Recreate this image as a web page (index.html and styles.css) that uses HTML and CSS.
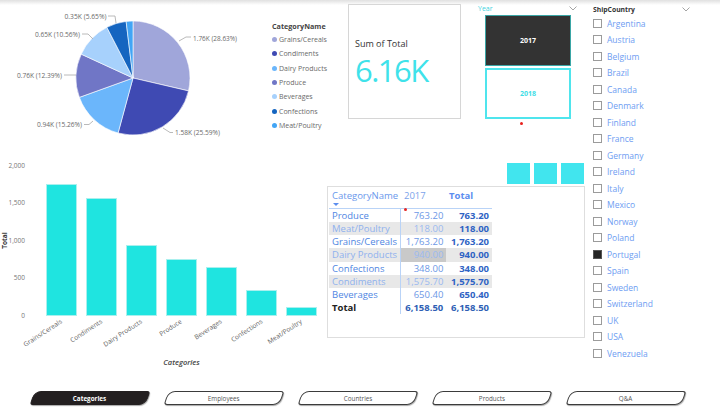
FILE: index.html
```html
<!DOCTYPE html>
<html lang="en">
<head>
<meta charset="utf-8">
<title>Categories</title>
<link rel="stylesheet" href="styles.css">
</head>
<body>
<div class="canvas">
  <div class="main">
    <div class="top-row">
      <svg class="pie" width="265" height="140" viewBox="0 0 265 140">
        <g class="slices">
          <path d="M133,78 L133,21 A57,57 0 0,1 188.52,90.89 Z" fill="#A0A6DA"/>
          <path d="M133,78 L188.52,90.89 A57,57 0 0,1 118.07,133.01 Z" fill="#3F4AB3"/>
          <path d="M133,78 L118.07,133.01 A57,57 0 0,1 79.39,97.37 Z" fill="#6BB6FB"/>
          <path d="M133,78 L79.39,97.37 A57,57 0 0,1 81.23,54.16 Z" fill="#7076C6"/>
          <path d="M133,78 L81.23,54.16 A57,57 0 0,1 106.89,27.33 Z" fill="#A7D1FC"/>
          <path d="M133,78 L106.89,27.33 A57,57 0 0,1 126.13,21.42 Z" fill="#1565C0"/>
          <path d="M133,78 L126.13,21.42 A57,57 0 0,1 133,21 Z" fill="#42A5F5"/>
        </g>
        <g class="leaders">
          <polyline points="179,41 186,37 191,37"/>
          <polyline points="163,128 170,132.5 173,132.5"/>
          <polyline points="84,124.5 89,124.5 93,121"/>
          <polyline points="64,75 76,75"/>
          <polyline points="82,34 88,34 93,39"/>
          <polyline points="108,16 115,16 116,23"/>
        </g>
        <text x="193" y="40.5" textLength="44" lengthAdjust="spacingAndGlyphs">1.76K (28.63%)</text>
        <text x="175" y="135" textLength="45" lengthAdjust="spacingAndGlyphs">1.58K (25.59%)</text>
        <text x="37" y="127" textLength="45" lengthAdjust="spacingAndGlyphs">0.94K (15.26%)</text>
        <text x="17" y="77.5" textLength="45" lengthAdjust="spacingAndGlyphs">0.76K (12.39%)</text>
        <text x="35" y="36.5" textLength="45" lengthAdjust="spacingAndGlyphs">0.65K (10.56%)</text>
        <text x="64.5" y="18.5" textLength="42" lengthAdjust="spacingAndGlyphs">0.35K (5.65%)</text>
      </svg>

      <div class="legend">
        <div class="legend-title">CategoryName</div>
        <div class="legend-item"><span class="dot c-grains"></span>Grains/Cereals</div>
        <div class="legend-item"><span class="dot c-condiments"></span>Condiments</div>
        <div class="legend-item"><span class="dot c-dairy"></span>Dairy Products</div>
        <div class="legend-item"><span class="dot c-produce"></span>Produce</div>
        <div class="legend-item"><span class="dot c-beverages"></span>Beverages</div>
        <div class="legend-item"><span class="dot c-confections"></span>Confections</div>
        <div class="legend-item"><span class="dot c-meat"></span>Meat/Poultry</div>
      </div>

      <div class="card">
        <div class="card-title">Sum of Total</div>
        <div class="card-value">6.16K</div>
      </div>

      <div class="year">
        <div class="year-head">
          <span>Year</span>
          <svg class="chev" width="8" height="5" viewBox="0 0 8 5"><polyline points="0.5,0.5 4,4 7.5,0.5"/></svg>
        </div>
        <div class="year-box y2017">2017</div>
        <div class="year-box y2018">2018</div>
        <div class="red-dot"></div>
      </div>
    </div>

    <div class="bottom-row">
      <div class="barchart">
        <div class="bar-main">
          <div class="y-title"><span>Total</span></div>
          <div class="y-ticks">
            <span>2,000</span><span>1,500</span><span>1,000</span><span>500</span><span>0</span>
          </div>
          <div class="plot">
            <div class="bar" style="height:132.2px"></div>
            <div class="bar" style="height:118.2px"></div>
            <div class="bar" style="height:70.5px"></div>
            <div class="bar" style="height:57.2px"></div>
            <div class="bar" style="height:48.8px"></div>
            <div class="bar" style="height:26.1px"></div>
            <div class="bar" style="height:8.9px"></div>
          </div>
        </div>
        <div class="x-labels">
          <div class="xl"><span>Grains/Cereals</span></div>
          <div class="xl"><span>Condiments</span></div>
          <div class="xl"><span>Dairy Products</span></div>
          <div class="xl"><span>Produce</span></div>
          <div class="xl"><span>Beverages</span></div>
          <div class="xl"><span>Confections</span></div>
          <div class="xl"><span>Meat/Poultry</span></div>
        </div>
        <div class="x-title">Categories</div>
      </div>

      <div class="right-col">
        <div class="tiles">
          <div class="tile"></div><div class="tile"></div><div class="tile"></div>
        </div>
        <div class="matrix">
          <div class="thead">
            <div class="th c1"><span>CategoryName</span><span class="sort"></span></div>
            <div class="th c2">2017<span class="mark"></span></div>
            <div class="th c3 bold">Total</div>
          </div>
          <div class="tr"><div class="c1">Produce</div><div class="c2">763.20</div><div class="c3">763.20</div></div>
          <div class="tr dim"><div class="c1">Meat/Poultry</div><div class="c2">118.00</div><div class="c3">118.00</div></div>
          <div class="tr"><div class="c1">Grains/Cereals</div><div class="c2">1,763.20</div><div class="c3">1,763.20</div></div>
          <div class="tr dim"><div class="c1">Dairy Products</div><div class="c2 sel">940.00</div><div class="c3">940.00</div></div>
          <div class="tr"><div class="c1">Confections</div><div class="c2">348.00</div><div class="c3">348.00</div></div>
          <div class="tr dim"><div class="c1">Condiments</div><div class="c2">1,575.70</div><div class="c3">1,575.70</div></div>
          <div class="tr"><div class="c1">Beverages</div><div class="c2">650.40</div><div class="c3">650.40</div></div>
          <div class="tr total"><div class="c1">Total</div><div class="c2">6,158.50</div><div class="c3">6,158.50</div></div>
        </div>
      </div>
    </div>
  </div>

  <div class="ship">
    <div class="ship-head">
      <span>ShipCountry</span>
      <svg class="chev" width="8" height="5" viewBox="0 0 8 5"><polyline points="0.5,0.5 4,4 7.5,0.5"/></svg>
    </div>
    <div class="ship-item"><span class="box"></span>Argentina</div>
    <div class="ship-item"><span class="box"></span>Austria</div>
    <div class="ship-item"><span class="box"></span>Belgium</div>
    <div class="ship-item"><span class="box"></span>Brazil</div>
    <div class="ship-item"><span class="box"></span>Canada</div>
    <div class="ship-item"><span class="box"></span>Denmark</div>
    <div class="ship-item"><span class="box"></span>Finland</div>
    <div class="ship-item"><span class="box"></span>France</div>
    <div class="ship-item"><span class="box"></span>Germany</div>
    <div class="ship-item"><span class="box"></span>Ireland</div>
    <div class="ship-item"><span class="box"></span>Italy</div>
    <div class="ship-item"><span class="box"></span>Mexico</div>
    <div class="ship-item"><span class="box"></span>Norway</div>
    <div class="ship-item"><span class="box"></span>Poland</div>
    <div class="ship-item"><span class="box on"></span>Portugal</div>
    <div class="ship-item"><span class="box"></span>Spain</div>
    <div class="ship-item"><span class="box"></span>Sweden</div>
    <div class="ship-item"><span class="box"></span>Switzerland</div>
    <div class="ship-item"><span class="box"></span>UK</div>
    <div class="ship-item"><span class="box"></span>USA</div>
    <div class="ship-item"><span class="box"></span>Venezuela</div>
  </div>

  <nav class="tabs">
    <div class="tab active"><span>Categories</span></div>
    <div class="tab"><span>Employees</span></div>
    <div class="tab"><span>Countries</span></div>
    <div class="tab"><span>Products</span></div>
    <div class="tab"><span>Q&amp;A</span></div>
  </nav>
</div>
</body>
</html>
```

FILE: styles.css
```css
* { box-sizing: border-box; }
html, body { margin: 0; padding: 0; }
body {
  width: 720px;
  height: 409px;
  overflow: hidden;
  background: #fff;
  font-family: "Open Sans", "Noto Sans", sans-serif;
  color: #333;
  position: relative;
}
body::before {
  content: "";
  position: absolute;
  top: 0; left: 0; right: 0;
  height: 5px;
  background: linear-gradient(#e0e0e0, rgba(255,255,255,0));
  z-index: 5;
}

.canvas {
  display: grid;
  grid-template-columns: 585px 135px;
  grid-template-rows: 370px 39px;
}
.main { display: flex; flex-direction: column; }
.top-row { display: flex; height: 150px; }

/* pie */
.pie { display: block; flex: none; width: 265px; height: 140px; }
.pie .slices path { stroke: #fff; stroke-width: 0.6; }
.pie .leaders polyline { fill: none; stroke: #a8a8a8; stroke-width: 0.8; }
.pie text { font-family: "Open Sans", sans-serif; font-size: 7px; fill: #6a6a6a; }

/* legend */
.legend { flex: none; width: 83px; padding: 21px 0 0 7px; }
.legend-title { font-size: 7.2px; font-weight: 700; line-height: 11px; color: #444; }
.legend-item { display: flex; align-items: center; height: 14.45px; font-size: 7px; color: #6a6a6a; white-space: nowrap; }
.dot { width: 5px; height: 5px; border-radius: 50%; margin-right: 2px; flex: none; }
.c-grains { background: #A0A6DA; }
.c-condiments { background: #3F4AB3; }
.c-dairy { background: #6BB6FB; }
.c-produce { background: #7076C6; }
.c-beverages { background: #A7D1FC; }
.c-confections { background: #1565C0; }
.c-meat { background: #42A5F5; }

/* card */
.card {
  flex: none;
  margin: 4px 0 0 0;
  width: 113px;
  height: 115px;
  border: 1px solid #d6d6d6;
  padding: 33px 0 0 6px;
}
.card-title { font-size: 9px; line-height: 12px; color: #333; }
.card-value { font-size: 31px; line-height: 34px; margin-top: 3px; color: #3fe2ea; letter-spacing: -1.5px; }

/* year slicer */
.year { flex: none; margin-left: 17px; width: 100px; padding-top: 3px; }
.year-head {
  display: flex; justify-content: space-between; align-items: center;
  height: 11px; font-size: 7px; color: #3fd3de; padding-right: 1px;
}
.chev { display: block; }
.chev polyline { fill: none; stroke: #9a9a9a; stroke-width: 0.9; }
.year-box {
  margin-left: 7px; width: 86px; height: 51px;
  display: flex; align-items: center; justify-content: center;
  font-size: 7px; font-weight: 700;
}
.y2017 { margin-top: 1px; background: #333; color: #fff; border: 1px solid #3aa6a6; }
.y2018 { margin-top: 2px; background: #fff; color: #3fdde6; border: 2px solid #4fe5ed; }
.red-dot { width: 3px; height: 3px; border-radius: 50%; background: #e8201c; margin: 3px 0 0 42px; }

/* ship country slicer */
.ship { padding: 3px 0 0 8px; }
.ship-head {
  display: flex; justify-content: space-between; align-items: center;
  height: 12px; padding-right: 30px;
  font-size: 6.8px; font-weight: 700; color: #333;
}
.ship-item { display: flex; align-items: center; height: 16.5px; font-size: 8.5px; color: #6e9df2; white-space: nowrap; }
.box { flex: none; width: 9px; height: 9px; border: 1px solid #9b9b9b; margin-right: 5px; background: #fff; }
.box.on { background: #252525; border-color: #555; }

/* bar chart */
.bottom-row { display: flex; height: 220px; }
.barchart { flex: none; width: 326px; display: flex; flex-direction: column; }
.bar-main { display: flex; height: 166px; }
.y-title {
  flex: none; width: 8px; height: 150px; margin-top: 15.7px;
  display: flex; align-items: center; justify-content: center;
}
.y-title span { transform: rotate(-90deg); font-size: 6.5px; line-height: 7px; font-weight: 700; color: #333; white-space: nowrap; }
.y-ticks {
  flex: none; width: 17px; height: 162px; margin-top: 9.7px;
  display: flex; flex-direction: column; justify-content: space-between;
  text-align: right; font-size: 6.5px; line-height: 12px; color: #777;
}
.plot {
  flex: none; margin: 15.7px 0 0 15px; height: 150px;
  display: flex; align-items: flex-end; gap: 9px; padding-left: 6px;
}
.bar { flex: none; width: 31px; background: #1fe4e0; border: 1px solid #a9f0ee; }
.x-labels { display: flex; gap: 9px; padding-left: 46px; height: 30px; }
.xl { flex: none; width: 31px; padding-right: 15.5px; display: flex; justify-content: flex-end; align-items: flex-start; }
.xl span {
  flex: none; white-space: nowrap; font-size: 6.5px; line-height: 10px; color: #5e5e5e;
  transform: rotate(-33deg); transform-origin: 100% 50%;
}
.x-title {
  margin-top: 11px; padding-left: 46px; width: 317px; text-align: center;
  font-size: 7.5px; line-height: 10px; font-style: italic; font-weight: 600; color: #444;
}

/* right column: tiles + matrix */
.right-col { flex: none; width: 259px; display: flex; flex-direction: column; }
.tiles { display: flex; justify-content: flex-end; gap: 4px; margin-top: 12.5px; padding-right: 1px; }
.tile { width: 23px; height: 21.5px; background: #41e5ee; }
.matrix {
  margin: 2px 0 0 1px; width: 258px; height: 152px;
  border: 1px solid #dedede; padding-left: 1px;
}
.thead { display: flex; width: 163px; height: 22px; border-bottom: 1px solid #b9d3f7; }
.th { font-size: 9.5px; line-height: 12px; padding-top: 3px; color: #6b98ec; white-space: nowrap; }
.th.c1 { display: flex; flex-direction: column; align-items: flex-start; padding-left: 3px; }
.th.c2 { position: relative; padding-left: 3px; color: #7ba3ea; }
.th.c3 { padding-left: 3px; color: #5b8def; font-weight: 700; }
.sort {
  width: 0; height: 0; margin: 1px 0 0 1px;
  border-left: 3px solid transparent; border-right: 3px solid transparent;
  border-top: 3px solid #5b8def;
}
.mark { position: absolute; left: 3px; bottom: -2.5px; width: 3px; height: 3px; border-radius: 50%; background: #e52421; }
.c1 { flex: none; width: 72px; }
.c2 { flex: none; width: 45px; }
.c3 { flex: none; width: 46px; }

.tr { display: flex; width: 163px; height: 13.15px; font-size: 9.5px; line-height: 13.15px; white-space: nowrap; }
.tr .c1 { padding-left: 3px; border-right: 1px solid #b9d3f7; color: #4f86e2; }
.tr .c2 { text-align: right; padding-right: 2.7px; color: #6d98e6; }
.tr .c3 { text-align: right; padding-right: 3px; color: #2f63c4; font-weight: 700; }
.tr.dim { background: #e8e8e8; }
.tr.dim .c1 { color: #8fb1ee; }
.tr.dim .c2 { color: #9ab9f0; }
.tr .c2.sel { background: #c9c9c9; }
.tr.total .c1 { color: #222; font-weight: 700; }
.tr.total .c2 { color: #2f5fb5; font-weight: 700; }
.tr.total .c3 { color: #2f5fb5; }

/* tabs */
.tabs { grid-column: 1 / span 2; display: flex; gap: 18px; padding: 21px 0 0 31.5px; }
.tab {
  flex: none; width: 116px; height: 14px;
  border: 1px solid #3b3b3b; border-radius: 7px 3px 7px 3px;
  transform: skewX(-18deg);
  display: flex; align-items: center; justify-content: center;
  background: #fff; color: #555; font-size: 6.3px;
  box-shadow: 1px 1px 1px rgba(0,0,0,0.35);
}
.tab span { transform: skewX(18deg); }
.tab.active { background: #231f20; border-color: #231f20; color: #fff; font-weight: 700; }
```
